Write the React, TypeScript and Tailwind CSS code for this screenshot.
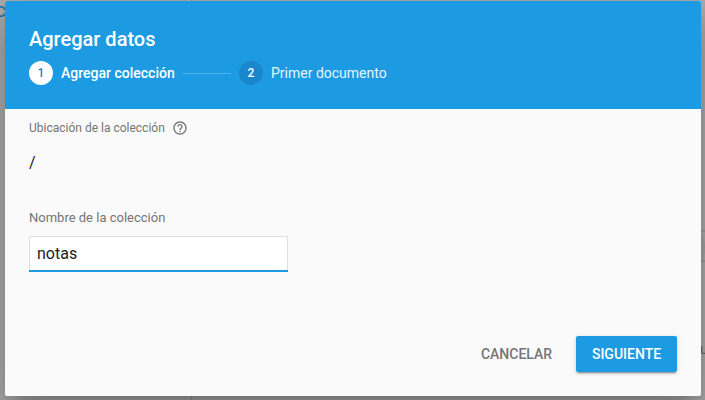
import { MdHelpOutline } from 'react-icons/md';

function Backdrop() {
  return (
    <div className="absolute inset-0 bg-[#adadad]" aria-hidden="true">
      <div className="absolute left-[191px] top-0 h-full w-px bg-[#969696]" />
      <span className="absolute left-[-4px] top-[4px] text-[15px] font-medium leading-4 text-[#1677ad]">C</span>
      <div className="absolute left-[645px] top-[218px] h-[60px] w-[60px] rounded-full bg-[#a5a5a5]" />
      <div className="absolute left-[690px] top-[230px] h-[2px] w-[15px] bg-[#9d9d9d]" />
      <div className="absolute left-[690px] top-[260px] h-[2px] w-[15px] bg-[#9d9d9d]" />
      <span className="absolute left-[700px] top-[341px] text-[14px] leading-4 text-[#606060]">u</span>
    </div>
  );
}

function Stepper() {
  return (
    <div className="flex h-6 items-center text-[14px] leading-6">
      <span className="flex size-6 items-center justify-center rounded-full bg-white text-[12px] font-medium text-[#1a85cb]">1</span>
      <span className="ml-2 w-[114px] whitespace-nowrap font-medium text-white">Agregar colección</span>
      <span className="ml-2 h-px w-12 bg-[#4fb3ea]" />
      <span className="ml-2 flex size-6 items-center justify-center rounded-full bg-[#1a86cb] text-[12px] font-medium text-white">2</span>
      <span className="ml-2 whitespace-nowrap text-[#e6f4fc]">Primer documento</span>
    </div>
  );
}

export default function App() {
  return (
    <div className="relative h-[400px] w-[705px] overflow-hidden pl-[5px] pt-px font-['Roboto',sans-serif]">
      <Backdrop />
      <div className="relative flex h-[395px] w-[696px] flex-col rounded-[2px] bg-[#fafafa] shadow-[0_11px_15px_-7px_rgba(0,0,0,0.2),0_24px_38px_3px_rgba(0,0,0,0.14),0_9px_46px_8px_rgba(0,0,0,0.12)]">
        <header className="h-[108px] rounded-t-[2px] bg-[#1c9be3] px-6 pt-6">
          <h1 className="mb-2 h-7 text-[20px] font-medium leading-7 text-white">Agregar datos</h1>
          <Stepper />
        </header>
        <main className="flex-1 px-6 pt-[11px]">
          <div className="flex h-4 items-center text-[12px] leading-4 text-[#757575]">
            <span className="w-[135px] whitespace-nowrap">Ubicación de la colección</span>
            <MdHelpOutline className="ml-2 size-4" />
          </div>
          <div className="mt-[15px] h-6 text-[16px] leading-6 text-[#212121]">/</div>
          <label className="mt-[35px] block h-4 text-[13px] leading-4 text-[#757575]" htmlFor="name">
            Nombre de la colección
          </label>
          <div className="mt-[10px] h-9 w-[259px] border-b-2 border-[#1c9be3]">
            <input
              id="name"
              defaultValue="notas"
              className="block h-[34px] w-full border border-b-0 border-[#e0e0e0] bg-white px-[7px] text-[16px] text-[#212121] outline-none"
            />
          </div>
        </main>
        <footer className="flex h-[60px] justify-end pr-6 text-[14px] font-medium">
          <button className="h-9 w-[103px] text-[#757575]">CANCELAR</button>
          <button className="ml-2 h-9 w-[101px] rounded-[2px] bg-[#1c9be3] text-white shadow-[0_3px_1px_-2px_rgba(0,0,0,0.2),0_2px_2px_0_rgba(0,0,0,0.14),0_1px_5px_0_rgba(0,0,0,0.12)]">SIGUIENTE</button>
        </footer>
      </div>
    </div>
  );
}
